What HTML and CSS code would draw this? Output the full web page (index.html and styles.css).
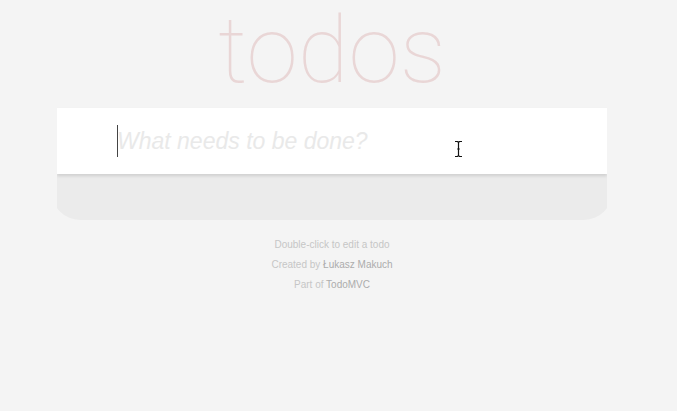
FILE: index.html
```html
<!DOCTYPE html>
<html lang="en">
<head>
<meta charset="utf-8">
<title>todos</title>
<link rel="stylesheet" href="styles.css">
</head>
<body>
<h1 class="title">todos</h1>
<section class="todoapp">
  <header class="header">
    <div class="entry">
      <input class="new-todo" type="text" placeholder="What needs to be done?">
      <span class="caret"></span>
      <svg class="pointer" width="9" height="18" viewBox="0 0 9 18" aria-hidden="true">
        <path d="M1 1.5h2.5L4.5 2.5 5.5 1.5H8M4.5 2.5v13M1 16.5h2.5l1-1 1 1H8M3.2 9h2.6" fill="none" stroke="#111" stroke-width="1.2"/>
      </svg>
    </div>
  </header>
</section>
<footer class="info">
  <p>Double-click to edit a todo</p>
  <p>Created by <a href="#">Łukasz Makuch</a></p>
  <p>Part of <a href="#">TodoMVC</a></p>
</footer>
</body>
</html>
```
FILE: styles.css
```css
html {
  background: #f4f4f4;
  padding-right: 13px;
}

body {
  margin: 0 auto;
  width: 550px;
  font-family: "Liberation Sans", Arial, sans-serif;
  color: #111;
}

.title {
  margin: 0;
  padding-top: 4px;
  height: 108px;
  box-sizing: border-box;
  font-family: Roboto, "Helvetica Neue", sans-serif;
  font-weight: 100;
  font-size: 93px;
  line-height: 93px;
  text-align: center;
  color: rgba(175, 47, 47, 0.15);
}

.todoapp {
  margin: 0 -5px;
  padding: 0 5px 46px;
  background: #ebebeb;
  border-radius: 0 0 28px 28px;
}

.entry {
  position: relative;
  background: #fff;
  box-shadow: 0 2px 3px rgba(0, 0, 0, 0.12);
}

.new-todo {
  display: block;
  width: 100%;
  box-sizing: border-box;
  margin: 0;
  border: none;
  outline: none;
  background: transparent;
  padding: 16px 16px 16px 60px;
  height: 66px;
  font-family: "Liberation Sans", Arial, sans-serif;
  font-size: 23px;
  line-height: 34px;
  color: #4d4d4d;
}

.new-todo::placeholder {
  font-style: italic;
  color: #e9e9e9;
}

.caret {
  position: absolute;
  left: 60px;
  top: 17px;
  width: 1px;
  height: 32px;
  background: #444;
}

.pointer {
  position: absolute;
  left: 397px;
  top: 32px;
}

.info {
  margin-top: 20px;
  text-align: center;
  font-size: 10px;
  color: #c6c6c6;
}

.info p {
  margin: 10px 0;
  line-height: 1;
}

.info p:first-child {
  margin-top: 0;
}

.info a {
  color: #acacac;
  text-decoration: none;
}
```
